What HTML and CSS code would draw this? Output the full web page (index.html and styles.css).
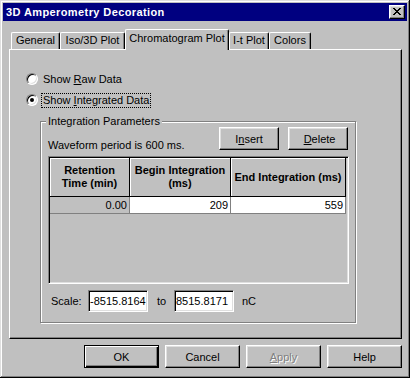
FILE: index.html
```html
<!DOCTYPE html>
<html lang="en">
<head>
    <meta charset="UTF-8">
    <meta name="viewport" content="width=device-width, initial-scale=1.0">
    <title>3D Amperometry Decoration</title>
    <link rel="stylesheet" href="styles.css">
</head>
<body>
    <div class="window">
        <!-- Title bar -->
        <div class="titlebar">
            <span class="title">3D Amperometry Decoration</span>
            <button class="close-btn" aria-label="Close">
                <svg width="8" height="7" viewBox="0 0 8 7" shape-rendering="crispEdges">
                    <path fill="#000" d="M0 0h2v1h-2zM6 0h2v1h-2zM1 1h2v1h-2zM5 1h2v1h-2zM2 2h4v1h-4zM3 3h2v1h-2zM2 4h4v1h-4zM1 5h2v1h-2zM5 5h2v1h-2zM0 6h2v1h-2zM6 6h2v1h-2z"/>
                </svg>
            </button>
        </div>

        <!-- Tabs -->
        <div class="tabs">
            <div class="tab tab-general">General</div>
            <div class="tab tab-iso">Iso/3D Plot</div>
            <div class="tab tab-chrom active">Chromatogram Plot</div>
            <div class="tab tab-it">I-t Plot</div>
            <div class="tab tab-colors">Colors</div>
        </div>

        <div class="panel">
            <div class="radio">
                <span class="radio-circle"></span>
                <span class="radio-label">Show <u>R</u>aw Data</span>
            </div>
            <div class="radio">
                <span class="radio-circle checked"><span class="dot"></span></span>
                <span class="radio-label focused">Show <u>I</u>ntegrated Data</span>
            </div>

            <!-- Integration Parameters group -->
            <div class="group">
                <span class="group-label">Integration Parameters</span>
                <div class="group-head">
                    <span class="period">Waveform period is 600 ms.</span>
                    <button class="btn small">I<u>n</u>sert</button>
                    <button class="btn small">&nbsp;<u>D</u>elete</button>
                </div>

                <div class="grid">
                    <div class="table">
                        <div class="head">Retention<br>Time (min)</div>
                        <div class="head">Begin Integration<br>(ms)</div>
                        <div class="head">End Integration (ms)</div>
                        <div class="cell fixed">0.00</div>
                        <div class="cell">209</div>
                        <div class="cell">559</div>
                    </div>
                </div>

                <div class="scale-row">
                    <span class="scale-label">Scale:</span>
                    <input class="edit" type="text" value="-8515.8164" readonly>
                    <span class="to">to</span>
                    <input class="edit" type="text" value="8515.8171" readonly>
                    <span class="unit">nC</span>
                </div>
            </div>
        </div>

        <!-- Dialog buttons -->
        <div class="buttons">
            <button class="btn default">OK</button>
            <button class="btn">Cancel</button>
            <button class="btn disabled"><u>A</u>pply</button>
            <button class="btn">Help</button>
        </div>
    </div>
</body>
</html>
```

FILE: styles.css
```css
/* Basic Reset */
* {
    box-sizing: border-box;
    margin: 0;
    padding: 0;
}

body {
    font-family: "Liberation Sans", Arial, sans-serif;
    font-size: 11px;
    line-height: 13px;
    color: #000;
    background-color: #c0c0c0;
}

button, input {
    font-family: inherit;
    font-size: 11px;
    color: #000;
}

/* Window frame */
.window {
    width: 410px;
    height: 378px;
    padding: 3px;
    background-color: #c0c0c0;
    box-shadow: inset -1px -1px #000, inset 1px 1px #dfdfdf,
                inset -2px -2px #808080, inset 2px 2px #fff;
}

.titlebar {
    height: 18px;
    display: flex;
    align-items: center;
    justify-content: space-between;
    padding: 0 2px 0 3px;
    background-color: #000080;
    color: #fff;
    font-weight: bold;
}

.title {
    letter-spacing: 0.4px;
}

.close-btn {
    width: 16px;
    height: 14px;
    display: flex;
    align-items: center;
    justify-content: center;
    padding: 0 1px 1px 0;
    background-color: #c0c0c0;
    border: 1px solid;
    border-color: #fff #000 #000 #fff;
    box-shadow: inset -1px -1px #808080, inset 1px 1px #dfdfdf;
}

/* Tabs */
.tabs {
    display: flex;
    align-items: flex-end;
    height: 20px;
    margin: 8px 0 0 8px;
}

.tab {
    height: 17px;
    padding-top: 1px;
    text-align: center;
    white-space: nowrap;
    background-color: #c0c0c0;
    border-top: 1px solid #fff;
    border-left: 1px solid #fff;
    border-right: 1px solid #000;
    border-radius: 2px 2px 0 0;
    box-shadow: inset -1px 0 #808080;
}

.tab-general { width: 49px; }
.tab-iso { width: 65px; }
.tab-chrom { width: 104px; }
.tab-it { width: 40px; }
.tab-colors { width: 42px; }

.tab.active {
    height: 21px;
    padding-top: 2px;
    margin-bottom: -1px;
    position: relative;
    z-index: 1;
}

/* Tab page */
.panel {
    margin-left: 6px;
    width: 393px;
    height: 290px;
    padding: 21px 0 0 16px;
    border-top: 1px solid #fff;
    border-left: 1px solid #fff;
    border-right: 1px solid #000;
    border-bottom: 1px solid #000;
    box-shadow: inset -1px -1px #808080;
}

.radio {
    display: flex;
    align-items: center;
    height: 16px;
}

.radio + .radio {
    margin-top: 5px;
}

.radio-circle {
    width: 12px;
    height: 12px;
    display: flex;
    align-items: center;
    justify-content: center;
    border-radius: 50%;
    background-color: #fff;
    border: 1px solid;
    border-color: #808080 #fff #fff #808080;
    box-shadow: inset 1px 1px #000, inset -1px -1px #dfdfdf;
}

.radio-circle .dot {
    width: 4px;
    height: 4px;
    border-radius: 50%;
    background-color: #000;
}

.radio-label {
    margin-left: 3px;
    padding: 0 1px;
    border: 1px dotted transparent;
}

.radio-label.focused {
    border-color: #000;
}

/* Group box */
.group {
    position: relative;
    margin: 13px 0 0 14px;
    width: 316px;
    height: 202px;
    padding: 5px 6px 0 7px;
    border: 1px solid #808080;
    box-shadow: inset 1px 1px #fff, 1px 1px #fff;
}

.group-label {
    position: absolute;
    left: 5px;
    top: -7px;
    padding: 0 2px;
    background-color: #c0c0c0;
}

.group-head {
    display: flex;
    align-items: flex-start;
    height: 23px;
    margin-right: 1px;
}

.period {
    flex: 1;
    margin-top: 12px;
}

.btn {
    width: 75px;
    height: 23px;
    background-color: #c0c0c0;
    border: 1px solid;
    border-color: #fff #000 #000 #fff;
    box-shadow: inset -1px -1px #808080, inset 1px 1px #dfdfdf;
}

.btn.small {
    width: 60px;
}

.btn.small + .btn.small {
    margin-left: 9px;
}

.btn.default {
    border-color: #000;
    box-shadow: inset 1px 1px #fff, inset -1px -1px #000, inset -2px -2px #808080;
}

.btn.disabled {
    color: #808080;
    text-shadow: 1px 1px #fff;
}

/* Grid control */
.grid {
    margin-top: 6px;
    width: 301px;
    height: 128px;
    padding: 1px;
    border: 1px solid;
    border-color: #808080 #fff #fff #808080;
    box-shadow: inset 1px 1px #000, inset -1px -1px #dfdfdf;
}

.table {
    display: grid;
    grid-template-columns: 80px 101px 115px;
    grid-template-rows: 39px 17px;
}

.head {
    display: flex;
    align-items: center;
    justify-content: center;
    text-align: center;
    white-space: nowrap;
    overflow: hidden;
    font-weight: bold;
    border-right: 1px solid #000;
    border-bottom: 1px solid #000;
    box-shadow: inset 1px 1px #fff;
}

.cell {
    padding-right: 2px;
    line-height: 16px;
    text-align: right;
    background-color: #fff;
    border-right: 1px solid #808080;
    border-bottom: 1px solid #808080;
}

.cell.fixed {
    background-color: #c0c0c0;
}

/* Scale row */
.scale-row {
    display: flex;
    align-items: center;
    height: 22px;
    margin-top: 6px;
}

.scale-label {
    width: 40px;
    padding-left: 3px;
}

.edit {
    width: 60px;
    height: 22px;
    padding: 0 0 0 1px;
    background-color: #fff;
    border: 1px solid;
    border-color: #808080 #fff #fff #808080;
    box-shadow: inset 1px 1px #000, inset -1px -1px #dfdfdf;
    outline: none;
}

.to {
    width: 26px;
    padding-left: 9px;
}

.unit {
    margin-left: 8px;
}

/* Dialog buttons */
.buttons {
    display: flex;
    justify-content: flex-end;
    gap: 6px;
    margin-top: 6px;
    padding-right: 5px;
}
```
